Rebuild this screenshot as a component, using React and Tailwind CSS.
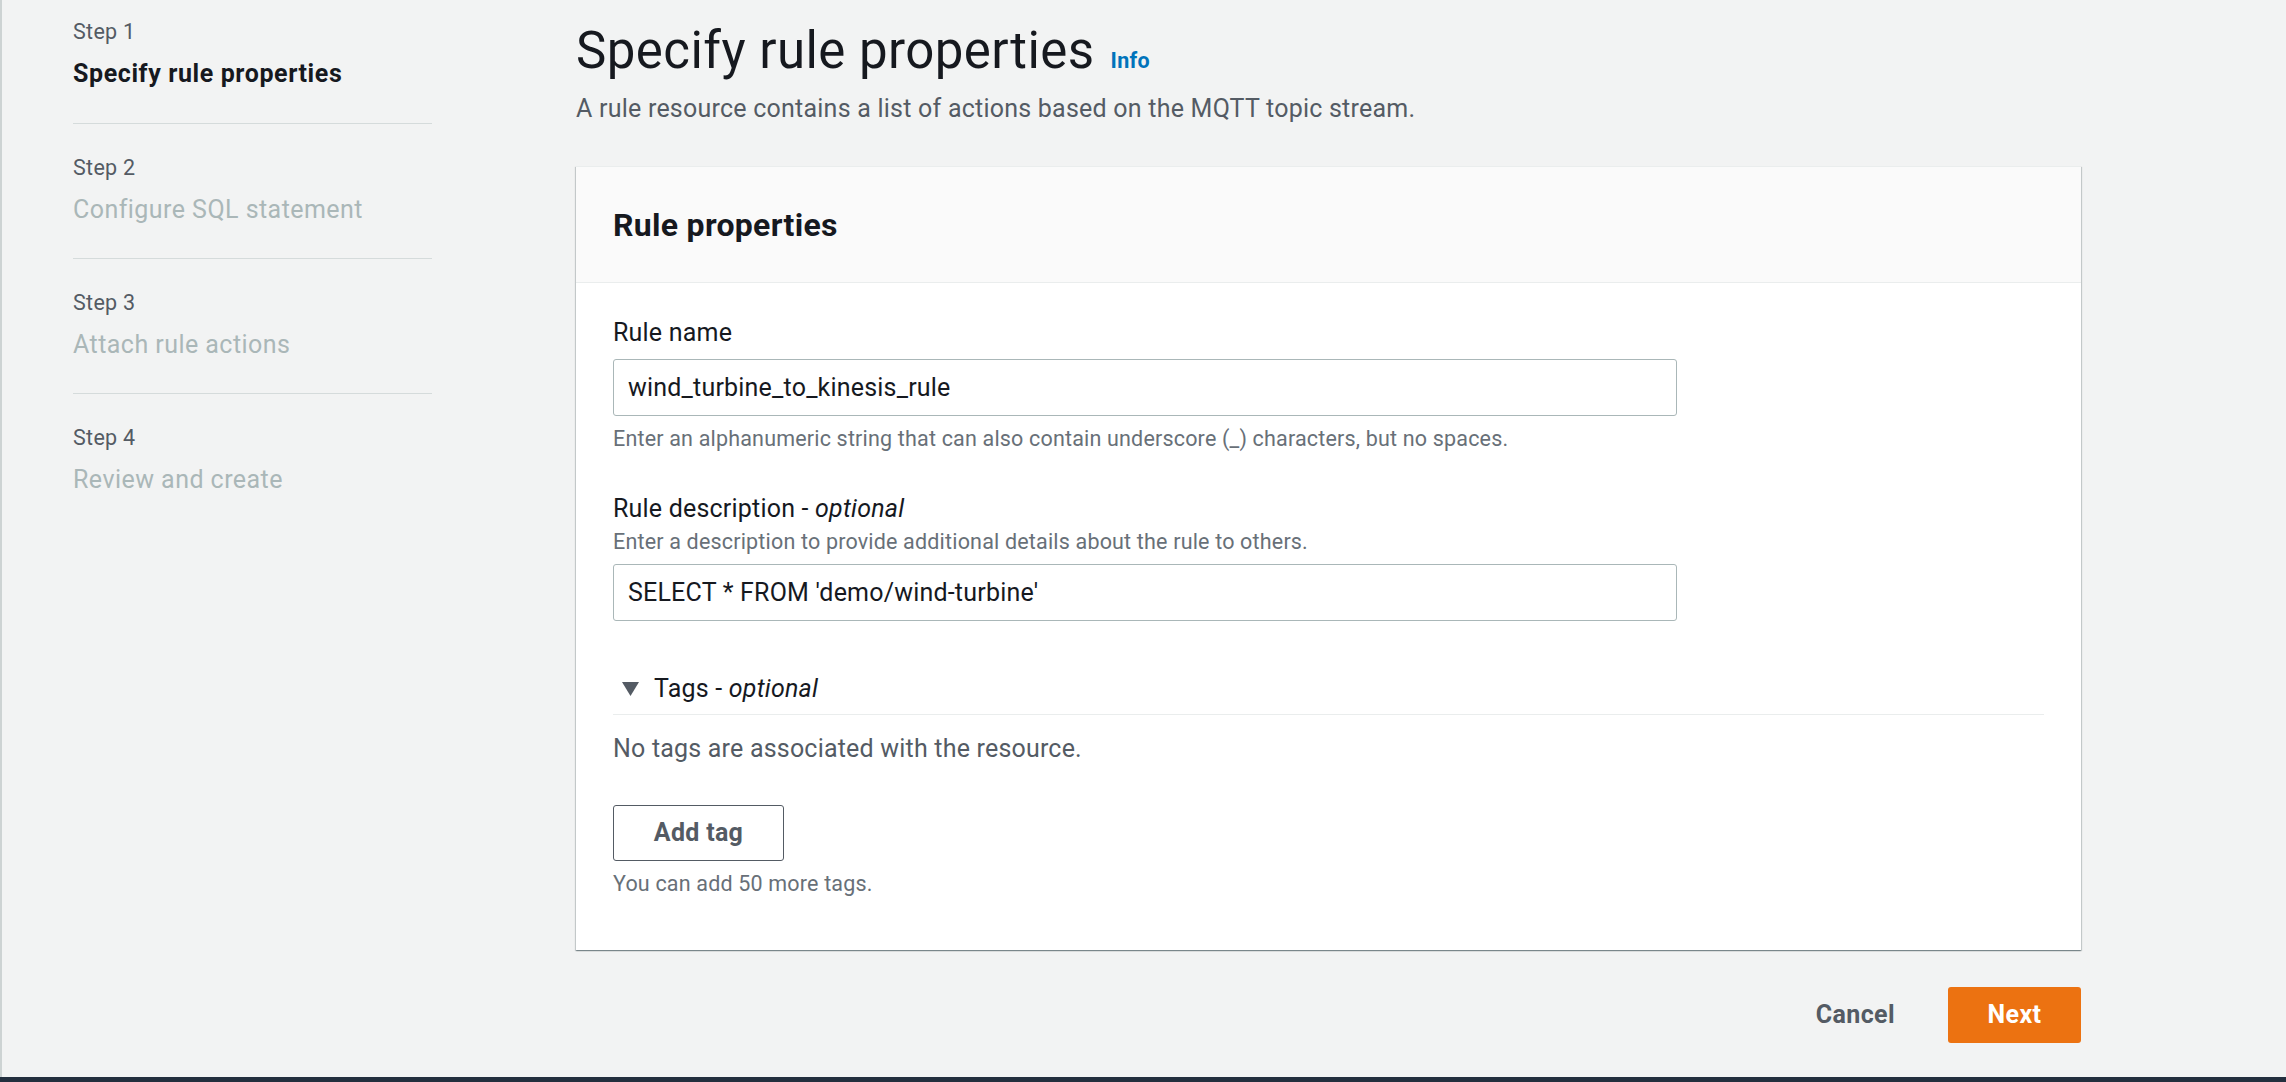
import React from "react";

const font = { fontFamily: "Roboto, 'Open Sans', sans-serif" };

function Step({ n, title, active, first }) {
  return (
    <div className={first ? "pt-[17px] pb-[31px] border-b border-[#d5dbdb]" : "pt-[29px] pb-[30px] border-b border-[#d5dbdb]"}>
      <div className="text-[21.5px] leading-[30px] text-[#545b64] tracking-[0.3px]">Step {n}</div>
      <div
        className={
          active
            ? "mt-[9px] text-[25px] leading-[36px] font-bold text-[#16191f] tracking-[0.6px]"
            : "mt-[9px] text-[25px] leading-[36px] text-[#aab7b8] tracking-[0.45px]"
        }
      >
        {title}
      </div>
    </div>
  );
}

function LastStep({ n, title }) {
  return (
    <div className="pt-[29px]">
      <div className="text-[21.5px] leading-[30px] text-[#545b64] tracking-[0.3px]">Step {n}</div>
      <div className="mt-[9px] text-[25px] leading-[36px] text-[#aab7b8] tracking-[0.45px]">{title}</div>
    </div>
  );
}

export default function App() {
  return (
    <div className="w-[2286px] h-[1082px] flex flex-col bg-[#f2f3f3] overflow-hidden" style={font}>
      <div className="flex-1 flex border-l-2 border-[#cdd3d3]">
        {/* Sidebar */}
        <div className="w-[430px] shrink-0 pl-[71px]">
          <Step n={1} title="Specify rule properties" active first />
          <Step n={2} title="Configure SQL statement" />
          <Step n={3} title="Attach rule actions" />
          <LastStep n={4} title="Review and create" />
        </div>

        {/* Main */}
        <div className="ml-[144px] w-[1505px] shrink-0 pt-[21px]">
          <div className="flex items-baseline">
            <h1 className="text-[51px] leading-[60px] font-normal text-[#16191f] tracking-[0.45px]">
              Specify rule properties
            </h1>
            <span className="ml-[16px] text-[21.5px] font-bold text-[#0073bb] tracking-[0.3px]">Info</span>
          </div>
          <p className="mt-[10px] text-[25px] leading-[36px] text-[#545b64] tracking-[0.23px]">
            A rule resource contains a list of actions based on the MQTT topic stream.
          </p>

          {/* Card */}
          <div className="mt-[39px] bg-white shadow-[0_1px_1px_0_rgba(0,28,36,0.3),1px_1px_1px_0_rgba(0,28,36,0.15),-1px_1px_1px_0_rgba(0,28,36,0.15)] border-t border-[#eaeded]">
            <div className="h-[116px] bg-[#fafafa] border-b border-[#eaeded] flex items-center px-[37px]">
              <h2 className="text-[32px] leading-[40px] font-bold text-[#16191f] tracking-[0.3px]">Rule properties</h2>
            </div>
            <div className="px-[37px] pt-[32px] pb-[51px]">
              <div className="text-[25px] leading-[36px] text-[#16191f] tracking-[0.2px]">Rule name</div>
              <div className="mt-[8px] w-[1064px] h-[57px] border border-[#aab7b8] rounded-[3px] flex items-center px-[14px] text-[25px] text-[#16191f] tracking-[0.2px]">
                wind_turbine_to_kinesis_rule
              </div>
              <div className="mt-[8px] text-[21.5px] leading-[30px] text-[#687078] tracking-[0.18px]">
                Enter an alphanumeric string that can also contain underscore (_) characters, but no spaces.
              </div>

              <div className="mt-[37px] text-[25px] leading-[36px] text-[#16191f] tracking-[0.2px]">
                Rule description - <i>optional</i>
              </div>
              <div className="text-[21.5px] leading-[30px] text-[#687078] tracking-[0.18px]">
                Enter a description to provide additional details about the rule to others.
              </div>
              <div className="mt-[7px] w-[1064px] h-[57px] border border-[#aab7b8] rounded-[3px] flex items-center px-[14px] text-[25px] text-[#16191f] tracking-[0.2px]">
                SELECT * FROM 'demo/wind-turbine'
              </div>

              <div className="mt-[50px] flex items-center pb-[7px] border-b border-[#eaeded]">
                <svg width="17" height="14" viewBox="0 0 17 14" className="ml-[9px]">
                  <polygon points="0,0 17,0 8.5,14" fill="#545b64" />
                </svg>
                <span className="ml-[15px] text-[25px] leading-[36px] text-[#16191f] tracking-[0.2px]">
                  Tags - <i>optional</i>
                </span>
              </div>
              <div className="mt-[16px] text-[25px] leading-[36px] text-[#545b64] tracking-[0.2px]">
                No tags are associated with the resource.
              </div>
              <button className="mt-[38px] w-[171px] h-[56px] border border-[#545b64] rounded-[3px] bg-white text-[25px] font-bold text-[#545b64] tracking-[0.3px]">
                Add tag
              </button>
              <div className="mt-[8px] text-[21.5px] leading-[30px] text-[#687078] tracking-[0.18px]">
                You can add 50 more tags.
              </div>
            </div>
          </div>

          <div className="mt-[37px] flex justify-end items-center">
            <button className="text-[25px] font-bold text-[#545b64] mr-[53px] tracking-[0.4px]">Cancel</button>
            <button className="w-[133px] h-[56px] rounded-[3px] bg-[#ec7211] text-white text-[25px] font-bold tracking-[0.4px]">
              Next
            </button>
          </div>
        </div>
      </div>
      <div className="h-[5px] bg-[#232f3e]" />
    </div>
  );
}
